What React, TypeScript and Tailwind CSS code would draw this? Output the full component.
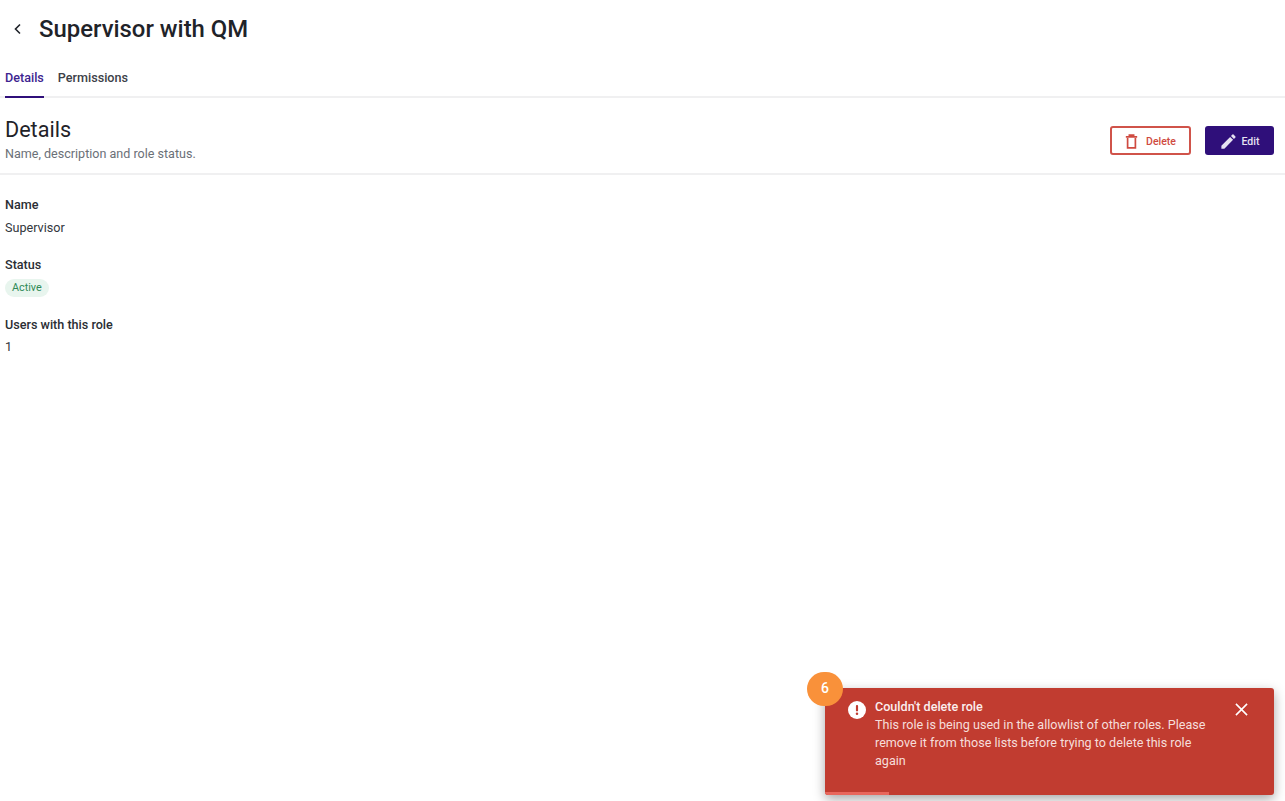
import React from "react";

const TrashIcon = () => (
  <svg viewBox="0 0 24 24" className="h-[17px] w-[17px]" fill="none" stroke="currentColor" strokeWidth="2.4">
    <path d="M4 5.5h16M9 5V3h6v2M6.5 7v14h11V7" />
  </svg>
);

const PencilIcon = () => (
  <svg viewBox="0 0 24 24" className="h-[19px] w-[19px]" fill="currentColor">
    <path d="M3 17.25V21h3.75L17.81 9.94l-3.75-3.75L3 17.25zM20.71 7.04a1 1 0 000-1.41l-2.34-2.34a1 1 0 00-1.41 0l-1.83 1.83 3.75 3.75 1.83-1.83z" />
  </svg>
);

const Field: React.FC<{ label: string; className?: string; children: React.ReactNode }> = ({
  label,
  className,
  children,
}) => (
  <div className={className}>
    <div className="text-[12.6px] leading-[18px] font-medium text-[#2a2e34]">{label}</div>
    {children}
  </div>
);

export default function App() {
  return (
    <div className="relative h-[801px] overflow-hidden bg-white font-['Roboto',sans-serif] text-[#1f2329] antialiased">
      <header className="flex h-[59px] items-center pb-[1px] pl-[12px]">
        <svg viewBox="0 0 24 24" className="h-[12px] w-[12px]" fill="none" stroke="#1f2329" strokeWidth="3.2">
          <path d="M16 3l-9 9 9 9" />
        </svg>
        <h1 className="ml-[15px] text-[23.9px] leading-[30px] font-medium">Supervisor with QM</h1>
      </header>

      <nav className="flex h-[39px] gap-[14px] border-b-2 border-[#f0f0f1] px-[5px] text-[12.6px] font-medium">
        <div className="h-[39px] border-b-2 border-[#2f0f7a] pt-[10px] leading-[18px] text-[#3d2490]">Details</div>
        <div className="pt-[10px] leading-[18px] text-[#3c4148]">Permissions</div>
      </nav>

      <section className="flex h-[77px] items-start justify-between border-b-2 border-[#f0f0f1] px-[11px] pl-[5px]">
        <div className="pt-[19px]">
          <h2 className="text-[21.6px] leading-[26px] font-normal">Details</h2>
          <p className="mt-[1px] text-[12.55px] leading-[20px] text-[#6b7077]">Name, description and role status.</p>
        </div>
        <div className="flex gap-[14px] pt-[28px]">
          <button className="flex h-[29px] w-[81px] items-center justify-center gap-[6px] rounded-[3px] border-2 border-[#d0534a] pt-[2px] pr-[2px] text-[10.5px] font-medium text-[#cf4a40]">
            <TrashIcon />
            Delete
          </button>
          <button className="flex h-[29px] w-[69px] items-center justify-center gap-[4px] rounded-[3px] bg-[#2f0f7a] pt-[2px] pr-[1px] text-[10.5px] font-medium text-[#e6e1f2]">
            <PencilIcon />
            Edit
          </button>
        </div>
      </section>

      <main className="px-[5px] pt-[21px] text-[12.6px]">
        <Field label="Name">
          <div className="mt-[5px] leading-[18px] text-[#33373d]">Supervisor</div>
        </Field>
        <Field label="Status" className="mt-[19px]">
          <span className="mt-[5px] inline-block rounded-full bg-[#e8f5ee] px-[7px] text-[10.8px] leading-[18px] text-[#2f8a57]">
            Active
          </span>
        </Field>
        <Field label="Users with this role" className="mt-[19px]">
          <div className="mt-[4px] leading-[18px] text-[#33373d]">1</div>
        </Field>
      </main>

      <div className="absolute top-[688px] left-[825px] h-[107px] w-[449px] overflow-hidden rounded-[3px] bg-[#c13c30] shadow-[0_4px_12px_rgba(0,0,0,0.35)]">
        <div className="flex items-start pt-[10px] pr-[26px] pl-[23px]">
          <svg viewBox="0 0 20 20" className="mt-[3px] h-[18px] w-[18px] shrink-0">
            <circle cx="10" cy="10" r="10" fill="#ffffff" />
            <rect x="8.8" y="4.5" width="2.4" height="7" rx="1" fill="#c13c30" />
            <circle cx="10" cy="14.2" r="1.4" fill="#c13c30" />
          </svg>
          <div className="ml-[9px] w-[340px] text-[12.6px] leading-[18px] text-[#f6dedb]">
            <div className="font-medium text-[#fbeeee]">Couldn't delete role</div>
            <div>This role is being used in the allowlist of other roles. Please remove it from those lists before trying to delete this role again</div>
          </div>
          <svg viewBox="0 0 14 14" className="mt-[5px] ml-auto h-[13px] w-[13px]" fill="none" stroke="#ffffff" strokeWidth="1.7">
            <path d="M1 1l12 12M13 1L1 13" />
          </svg>
        </div>
        <div className="absolute bottom-0 left-0 h-[3px] w-[64px] bg-[#e8675c]" />
      </div>

      <div className="absolute top-[672px] left-[807px] flex h-[34px] w-[36px] items-center justify-center rounded-full bg-[#f9913a] pb-[2px] text-[14px] font-medium text-white">
        6
      </div>
    </div>
  );
}
